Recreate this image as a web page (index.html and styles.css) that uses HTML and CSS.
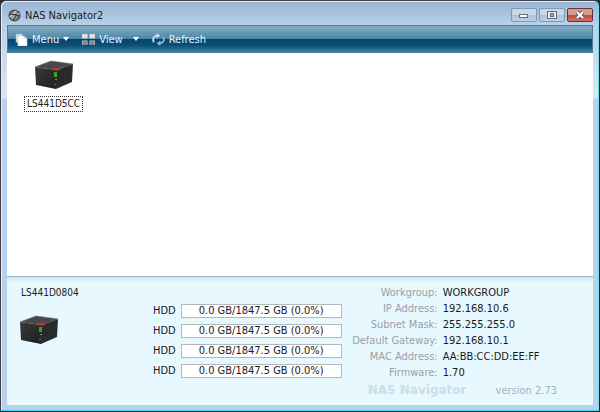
FILE: index.html
```
<!DOCTYPE html>
<html lang="en">
  <head>
    <meta charset="utf-8" />
    <title>NAS Navigator2</title>
    <link rel="stylesheet" href="styles.css" />
  </head>
  <body>
    <svg class="symbols" aria-hidden="true">
      <linearGradient id="front" x1="0" y1="0" x2="1" y2="1">
        <stop offset="0" stop-color="#3a3a3a" />
        <stop offset="1" stop-color="#1f1f1f" />
      </linearGradient>
      <symbol id="nas" viewBox="0 0 40 30">
        <path d="M1 7 L17 1 L39 4 L22 10 Z" fill="#48494a" />
        <path d="M1 7 L22 10 V29 L2 25 Z" fill="url(#front)" />
        <path d="M22 10 L39 4 L38 22 L22 29 Z" fill="#2b2c2d" />
        <path d="M25 12 V26 M29 10 V24 M33 9 V23" stroke="#242526" />
        <path d="M1 7 L17 1 L39 4" fill="none" stroke="#6b6d6e" stroke-width=".6" />
        <path d="M19 9 L23 9.5 L26 8.5" fill="none" stroke="#d5352b" stroke-width="2" />
        <path d="M20 12 H23 V17 H20 Z" fill="#2fa236" />
        <path d="M21 19.5 H23" stroke="#8a8a8a" />
        <path d="M20 24.5 H22" stroke="#2850b0" stroke-width="2" />
      </symbol>
    </svg>

    <div class="window">
      <header class="titlebar">
        <svg class="app-icon" viewBox="0 0 14 14">
          <circle cx="7" cy="7" r="6.5" fill="#4b535c" />
          <circle cx="7" cy="7" r="4.5" fill="#87919b" />
          <path d="M2 9 L9 2 M4 11 L12 5" stroke="#d8dee4" stroke-width="1.4" />
          <path d="M3 5 C6 8 9 4 12 8 M5 12 L9 7" fill="none" stroke="#2c3137" stroke-width="1.2" />
        </svg>
        <h1 class="title">NAS Navigator2</h1>
        <div class="window-buttons">
          <button class="window-button" type="button" aria-label="Minimize">
            <svg viewBox="0 0 12 10"><rect x="1.5" y="4.5" width="8" height="3" fill="#fff" stroke="#666d76" /></svg>
          </button>
          <button class="window-button" type="button" aria-label="Maximize">
            <svg viewBox="0 0 12 10">
              <rect x="1.5" y="1.5" width="9" height="7" fill="#e8edf2" stroke="#666d76" />
              <rect x="4.5" y="3.5" width="3" height="3" fill="#9fb4ca" stroke="#666d76" />
            </svg>
          </button>
          <button class="window-button close" type="button" aria-label="Close">
            <svg viewBox="0 0 12 10">
              <path d="M3 2 L9 8 M9 2 L3 8" stroke="#5b5461" stroke-width="4" />
              <path d="M3 2 L9 8 M9 2 L3 8" stroke="#fff" stroke-width="2.2" />
            </svg>
          </button>
        </div>
      </header>

      <main class="client">
        <nav class="toolbar">
          <button class="tool" type="button">
            <svg class="tool-icon" viewBox="0 0 14 14">
              <path d="M1 1 H8 V10 H1 Z" fill="#dce5e9" stroke="#8aa2ae" stroke-width=".5" />
              <path d="M3 3 H9 L13 6 V14 H3 Z" fill="#fff" stroke="#a9bac2" stroke-width=".5" />
              <path d="M9 3 V6 H13" fill="#cbd8de" />
            </svg>
            Menu
            <svg class="arrow" viewBox="0 0 6 4"><path d="M0 0 H6 L3 4 Z" fill="#fff" /></svg>
          </button>
          <button class="tool" type="button">
            <svg class="tool-icon" viewBox="0 0 14 14">
              <path d="M0 1 H6 V6 H0 Z M8 1 H14 V6 H8 Z" fill="#dce1e4" />
              <path d="M0 8 H6 V13 H0 Z M8 8 H14 V13 H8 Z" fill="#b9b5b1" />
              <path d="M1 10 H5 M9 10 H13 M1 12 H5 M9 12 H13" stroke="#48596a" />
            </svg>
            <span class="view-label">View</span>
            <svg class="arrow" viewBox="0 0 6 4"><path d="M0 0 H6 L3 4 Z" fill="#fff" /></svg>
          </button>
          <button class="tool" type="button">
            <svg class="tool-icon" viewBox="0 0 14 14">
              <path d="M2 10 C0 6 2 3 6 3" fill="none" stroke="#c5daf5" stroke-width="2" />
              <path d="M5 0 L9 3 L5 6 Z" fill="#c5daf5" />
              <path d="M12 4 C14 8 12 11 8 11" fill="none" stroke="#8fb2e4" stroke-width="2" />
              <path d="M9 8 L5 11 L9 14 Z" fill="#8fb2e4" />
            </svg>
            Refresh
          </button>
        </nav>

        <section class="devices">
          <button class="device" type="button">
            <svg class="nas-icon"><use href="#nas" /></svg>
            <span class="device-name">LS441D5CC</span>
          </button>
        </section>

        <section class="details">
          <div class="summary">
            <h2 class="host">LS441D0804</h2>
            <svg class="nas-icon"><use href="#nas" /></svg>
          </div>

          <ul class="disks">
            <li class="disk">HDD <span class="usage">0.0 GB/1847.5 GB (0.0%)</span></li>
            <li class="disk">HDD <span class="usage">0.0 GB/1847.5 GB (0.0%)</span></li>
            <li class="disk">HDD <span class="usage">0.0 GB/1847.5 GB (0.0%)</span></li>
            <li class="disk">HDD <span class="usage">0.0 GB/1847.5 GB (0.0%)</span></li>
          </ul>

          <div class="network">
            <dl class="properties">
              <dt>Workgroup:</dt>
              <dd>WORKGROUP</dd>
              <dt>IP Address:</dt>
              <dd>192.168.10.6</dd>
              <dt>Subnet Mask:</dt>
              <dd>255.255.255.0</dd>
              <dt>Default Gateway:</dt>
              <dd>192.168.10.1</dd>
              <dt>MAC Address:</dt>
              <dd>AA:BB:CC:DD:EE:FF</dd>
              <dt>Firmware:</dt>
              <dd>1.70</dd>
            </dl>
            <div class="about">
              <span class="brand">NAS Navigator</span>
              <span class="version">version 2.73</span>
            </div>
          </div>
        </section>
      </main>
    </div>
  </body>
</html>
```

FILE: styles.css
```
* {
  box-sizing: border-box;
}

body {
  margin: 0;
  background-color: #2b2f3a;
  font-family: "DejaVu Sans Condensed", "DejaVu Sans", sans-serif;
  font-size: 11px;
  color: #1a1a1a;
}

button {
  padding: 0;
  border: none;
  background: none;
  font: inherit;
  color: inherit;
}

h1,
h2,
ul,
dl,
dd {
  margin: 0;
  padding: 0;
  font-size: inherit;
  font-weight: normal;
}

.symbols {
  position: absolute;
  width: 0;
  height: 0;
}

.window {
  display: flex;
  flex-direction: column;
  min-height: 100vh;
  padding: 0 6px 6px;
  border: 1px solid #3c3f48;
  border-right-color: #10303c;
  border-bottom-color: #10303c;
  border-radius: 6px 6px 0 0;
  background: linear-gradient(#98b4d2, #b9d1ea 24px, #dbe7f3 96px, #b9d1ea 99px, #bad0ec);
  box-shadow: inset 0 -1px #3fd0ee, inset -1px 0 #6fdcf2, inset 1px 1px #e4eef8;
}

.titlebar {
  display: flex;
  align-items: center;
  height: 24px;
  padding: 4px 0 0 1px;
}

.app-icon {
  width: 13px;
  height: 13px;
}

.title {
  flex: 1;
  padding-left: 4px;
}

.window-buttons {
  display: flex;
  gap: 2px;
}

.window-button {
  display: flex;
  align-items: center;
  justify-content: center;
  width: 26px;
  height: 14px;
  border: 1px solid #8198b2;
  border-radius: 2px;
  background: linear-gradient(#c8d8e9 50%, #abc2da 50%, #bdd2e8);
}

.window-button svg {
  width: 12px;
  height: 10px;
}

.close {
  border-color: #6a3040;
  background: linear-gradient(#dd9a8f 50%, #bf4635 50%, #cf7560);
}

.client {
  flex: 1;
  display: flex;
  flex-direction: column;
  background-color: #fff;
}

.toolbar {
  display: flex;
  align-items: center;
  gap: 13px;
  height: 28px;
  padding: 0 7px;
  border: 1px solid #4a7d96;
  background: linear-gradient(#86adc3, #4d87a7 48%, #06446c 50%, #0a4f78 75%, #3a84a0);
  color: #e9f3f8;
}

.tool {
  display: flex;
  align-items: center;
  gap: 4px;
}

.tool-icon {
  width: 13px;
  height: 13px;
}

.arrow {
  width: 6px;
  height: 4px;
}

.view-label {
  padding-right: 6px;
}

.devices {
  flex: 1;
  padding: 7px 17px;
}

.device {
  display: flex;
  flex-direction: column;
  align-items: center;
  gap: 6px;
}

.nas-icon {
  width: 40px;
  height: 30px;
}

.device-name {
  padding: 0 2px;
  border: 1px dotted #333;
  font-size: 10px;
  line-height: 14px;
}

.details {
  display: flex;
  min-height: 129px;
  border-top: 1px solid #9db6c8;
  background: linear-gradient(#cfe3ee, #e8f8ff 6px);
}

.summary {
  width: 146px;
  padding: 10px 12px;
}

.host {
  padding-left: 2px;
  margin-bottom: 17px;
  font-size: 10px;
}

.disks {
  display: flex;
  flex-direction: column;
  gap: 6px;
  padding-top: 27px;
  list-style: none;
}

.disk {
  display: flex;
  align-items: center;
  gap: 5px;
  line-height: 12px;
}

.usage {
  width: 161px;
  border: 1px solid #b3b8bc;
  background-color: #fff;
  text-align: center;
}

.network {
  flex: 1;
  padding: 8px 6px 0 8px;
}

.properties {
  display: grid;
  grid-template-columns: 88px 1fr;
  column-gap: 5px;
  line-height: 16px;
}

.properties dt {
  text-align: right;
  color: #9a9fa2;
}

.about {
  display: flex;
  align-items: center;
  justify-content: space-between;
  padding: 2px 30px 0 18px;
}

.brand {
  font-family: "DejaVu Sans", sans-serif;
  font-size: 12px;
  font-weight: bold;
  color: #cbdfe9;
}

.version {
  color: #9fb3bf;
}
```
